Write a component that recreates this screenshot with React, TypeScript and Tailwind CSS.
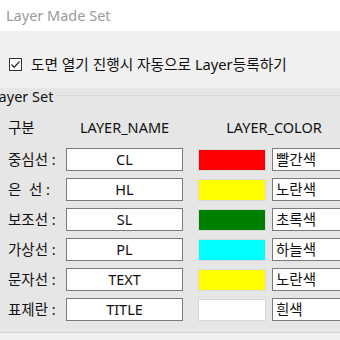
import React from "react";

const rows = [
  { label: "중심선 :", name: "CL", color: "#ff0000", text: "빨간색" },
  { label: "은  선 :", name: "HL", color: "#ffff00", text: "노란색" },
  { label: "보조선 :", name: "SL", color: "#008000", text: "초록색" },
  { label: "가상선 :", name: "PL", color: "#00ffff", text: "하늘색" },
  { label: "문자선 :", name: "TEXT", color: "#ffff00", text: "노란색" },
  { label: "표제란 :", name: "TITLE", color: "#ffffff", text: "흰색" },
];

export default function App() {
  return (
    <div
      className="w-[340px] h-[340px] overflow-hidden bg-[#f0f0f0] text-[#111] flex flex-col"
      style={{ fontFamily: '"Noto Sans", "Noto Sans CJK KR", sans-serif' }}
    >
      <div className="h-[31px] bg-white flex items-center pl-[6px] text-[14.5px] text-[#9a9a9a] shrink-0">
        Layer Made Set
      </div>
      <div className="h-[57px] flex items-start pt-[27px] pl-[9px] shrink-0">
        <div className="w-[13px] h-[13px] border border-[#333] bg-white flex items-center justify-center">
          <svg width="11" height="11" viewBox="0 0 11 11">
            <path d="M1.5 5.5 L4.2 8.2 L9.5 2.5" stroke="#333" strokeWidth="1.3" fill="none" />
          </svg>
        </div>
        <span className="ml-[9px] text-[14.7px] leading-[14px] mt-[-1px]">도면 열기 진행시 자동으로 Layer등록하기</span>
      </div>
      <div className="h-[245px] bg-[#e6e6e6] border-b border-[#d4d4d4] flex flex-col shrink-0">
        <div className="flex items-center h-[15px]">
          <span className="ml-[-9px] text-[14.5px] leading-[14px]">Layer Set</span>
          <div className="flex-1 h-px bg-[#d6d6d6] ml-[3px]" />
        </div>
        <div className="grid grid-cols-[58px_117px_15px_68px_6px_80px] pl-[8px] mt-[17px] text-[14.5px] leading-[14px] items-center">
          <span>구분</span>
          <span className="text-center">LAYER_NAME</span>
          <span />
          <span className="col-span-3 text-center ml-[-2px]">LAYER_COLOR</span>
        </div>
        <div className="flex flex-col gap-[7px] mt-[14px] pl-[8px]">
          {rows.map((r) => (
            <div key={r.name} className="grid grid-cols-[58px_117px_15px_68px_6px_80px] h-[23px] items-center text-[14.5px]">
              <span className="whitespace-pre">{r.label}</span>
              <div className="h-[23px] bg-white border border-[#7a7a7a] flex items-center justify-center leading-none">
                {r.name}
              </div>
              <span />
              <div
                className="h-[22px] border border-[#d8d8d8]"
                style={{ backgroundColor: r.color }}
              />
              <span />
              <div className="h-[23px] bg-white border border-[#7a7a7a] flex items-center pl-[3px] leading-none">
                {r.text}
              </div>
            </div>
          ))}
        </div>
      </div>
    </div>
  );
}
